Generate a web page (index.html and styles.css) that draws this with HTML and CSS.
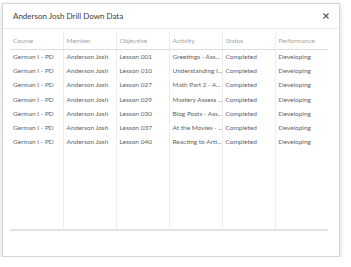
FILE: index.html
```html
<!DOCTYPE html>
<html lang="en">
<head>
    <meta charset="UTF-8">
    <title>Anderson Josh Drill Down Data</title>
    <link rel="stylesheet" href="styles.css">
</head>
<body>
    <div class="modal">
        <div class="modal-header">
            <h1>Anderson Josh Drill Down Data</h1>
            <button class="close-btn" aria-label="Close">
                <svg width="6" height="6" viewBox="0 0 6 6">
                    <path d="M0.5 0.5 L5.5 5.5 M5.5 0.5 L0.5 5.5" stroke="#555" stroke-width="1.1" />
                </svg>
            </button>
        </div>

        <div class="modal-body">
            <table class="drill-table">
                <thead>
                    <tr>
                        <th>Course</th>
                        <th>Member</th>
                        <th>Objective</th>
                        <th>Activity</th>
                        <th>Status</th>
                        <th>Performance</th>
                    </tr>
                </thead>
                <tbody>
                    <tr><td>German I - PD</td><td>Anderson Josh</td><td>Lesson 001</td><td>Greetings - Ass...</td><td>Completed</td><td>Developing</td></tr>
                    <tr><td>German I - PD</td><td>Anderson Josh</td><td>Lesson 010</td><td>Understanding I...</td><td>Completed</td><td>Developing</td></tr>
                    <tr><td>German I - PD</td><td>Anderson Josh</td><td>Lesson 027</td><td>Math Part 2 - A...</td><td>Completed</td><td>Developing</td></tr>
                    <tr><td>German I - PD</td><td>Anderson Josh</td><td>Lesson 029</td><td>Mastery Assess ...</td><td>Completed</td><td>Developing</td></tr>
                    <tr><td>German I - PD</td><td>Anderson Josh</td><td>Lesson 030</td><td>Blog Posts - Ass...</td><td>Completed</td><td>Developing</td></tr>
                    <tr><td>German I - PD</td><td>Anderson Josh</td><td>Lesson 037</td><td>At the Movies - ...</td><td>Completed</td><td>Developing</td></tr>
                    <tr><td>German I - PD</td><td>Anderson Josh</td><td>Lesson 040</td><td>Reacting to Arti...</td><td>Completed</td><td>Developing</td></tr>
                    <tr class="filler"><td></td><td></td><td></td><td></td><td></td><td></td></tr>
                </tbody>
            </table>
        </div>
    </div>
</body>
</html>
```

FILE: styles.css
```css
* {
    margin: 0;
    padding: 0;
    box-sizing: border-box;
}

body {
    font-family: 'Lato', 'Open Sans', sans-serif;
    background: white;
    padding: 3px 0 0 2px;
}

.modal {
    width: 338px;
    height: 254px;
    background: white;
    border: 1px solid #d6d6d6;
    box-shadow: 0 2px 5px rgba(0,0,0,0.18);
}

.modal-header {
    height: 25px;
    display: flex;
    align-items: center;
    justify-content: space-between;
    padding: 0 10px 0 10px;
    border-bottom: 1px solid #ececec;
}

.modal-header h1 {
    font-size: 8px;
    font-weight: 400;
    color: #3a3a3a;
}

.close-btn {
    background: none;
    border: none;
    display: flex;
    cursor: pointer;
}

.modal-body {
    padding: 3px 11px 0 7px;
}

.drill-table {
    width: 318px;
    border-collapse: collapse;
    table-layout: fixed;
    border-bottom: 2px solid #e2e2e2;
}

.drill-table th,
.drill-table td {
    text-align: left;
    font-size: 6.5px;
    white-space: nowrap;
    overflow: hidden;
    padding: 0 3px;
    border-left: 1px solid #ececec;
}

.drill-table th:first-child,
.drill-table td:first-child {
    border-left: none;
}

.drill-table th {
    height: 17px;
    font-weight: 400;
    color: #a4a4a4;
    border-bottom: 1px solid #dcdcdc;
}

.drill-table td {
    height: 14.3px;
    color: #636363;
}

.drill-table .filler td {
    height: 81px;
}
```
